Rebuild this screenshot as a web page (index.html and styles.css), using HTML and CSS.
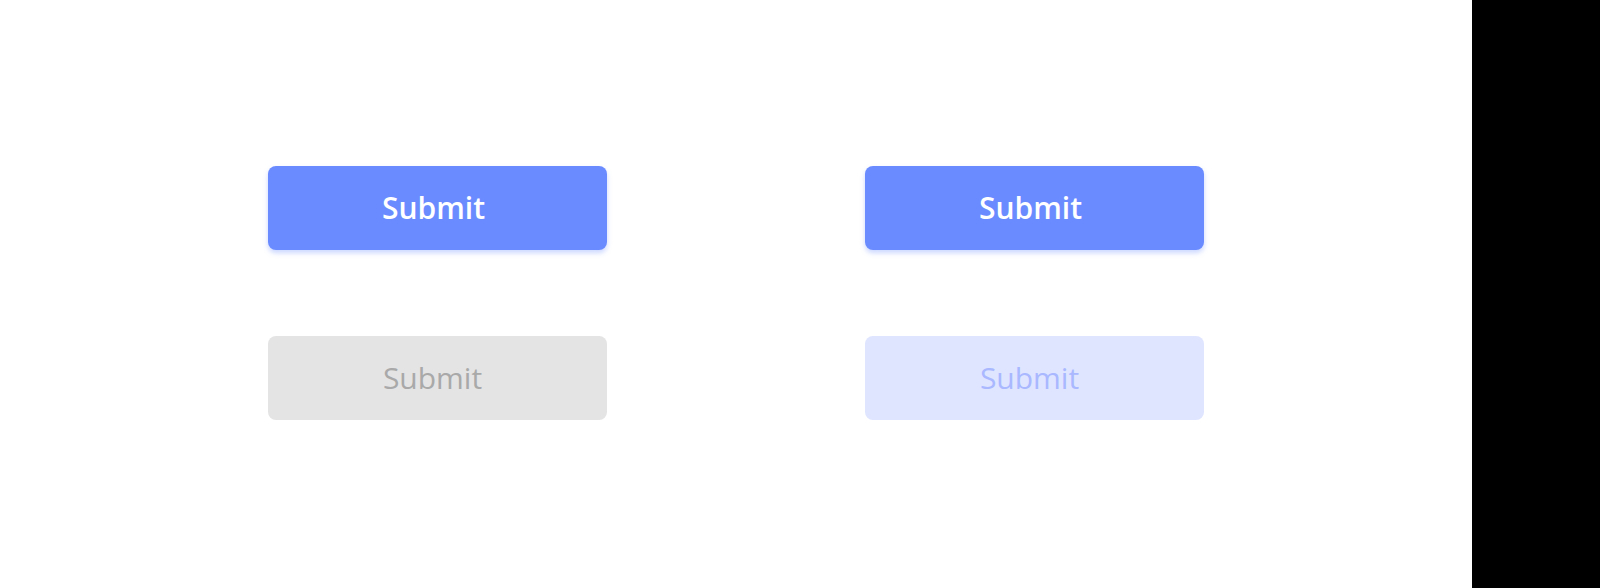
FILE: index.html
```html
<!DOCTYPE html>
<html>
<head>
<meta charset="utf-8">
<link rel="stylesheet" href="styles.css">
</head>
<body>
<div class="page">
  <main class="canvas">
    <div class="grid">
      <button class="btn btn-primary">Submit</button>
      <button class="btn btn-primary">Submit</button>
      <button class="btn btn-disabled-gray">Submit</button>
      <button class="btn btn-disabled-blue">Submit</button>
    </div>
  </main>
  <aside class="edge"></aside>
</div>
</body>
</html>
```
FILE: styles.css
```css
html, body {
  margin: 0;
  padding: 0;
  height: 100%;
}
body {
  font-family: "Open Sans", "Noto Sans", sans-serif;
}
.page {
  display: flex;
  width: 1600px;
  height: 588px;
}
.canvas {
  width: 1472px;
  background: #ffffff;
  box-sizing: border-box;
  padding: 166px 0 0 268px;
}
.edge {
  flex: 1;
  background: #000000;
}
.grid {
  display: grid;
  grid-template-columns: 339px 339px;
  grid-auto-rows: 84px;
  column-gap: 258px;
  row-gap: 86px;
}
.btn {
  border: none;
  border-radius: 8px;
  font-family: "Open Sans", "Noto Sans", sans-serif;
  font-size: 30px;
  padding: 0 8px 2px 0;
  margin: 0;
  display: flex;
  align-items: center;
  justify-content: center;
}
.btn-primary {
  background: #6a8bff;
  color: #ffffff;
  font-weight: 600;
  box-shadow: 0 3px 5px rgba(106, 139, 255, 0.35);
}
.btn-disabled-gray {
  background: #e4e4e4;
  color: #a9a9a9;
  font-weight: 400;
  padding-right: 10px;
}
.btn-disabled-blue {
  background: #dfe5ff;
  color: #a9b8ff;
  font-weight: 400;
  padding-right: 10px;
}
```
